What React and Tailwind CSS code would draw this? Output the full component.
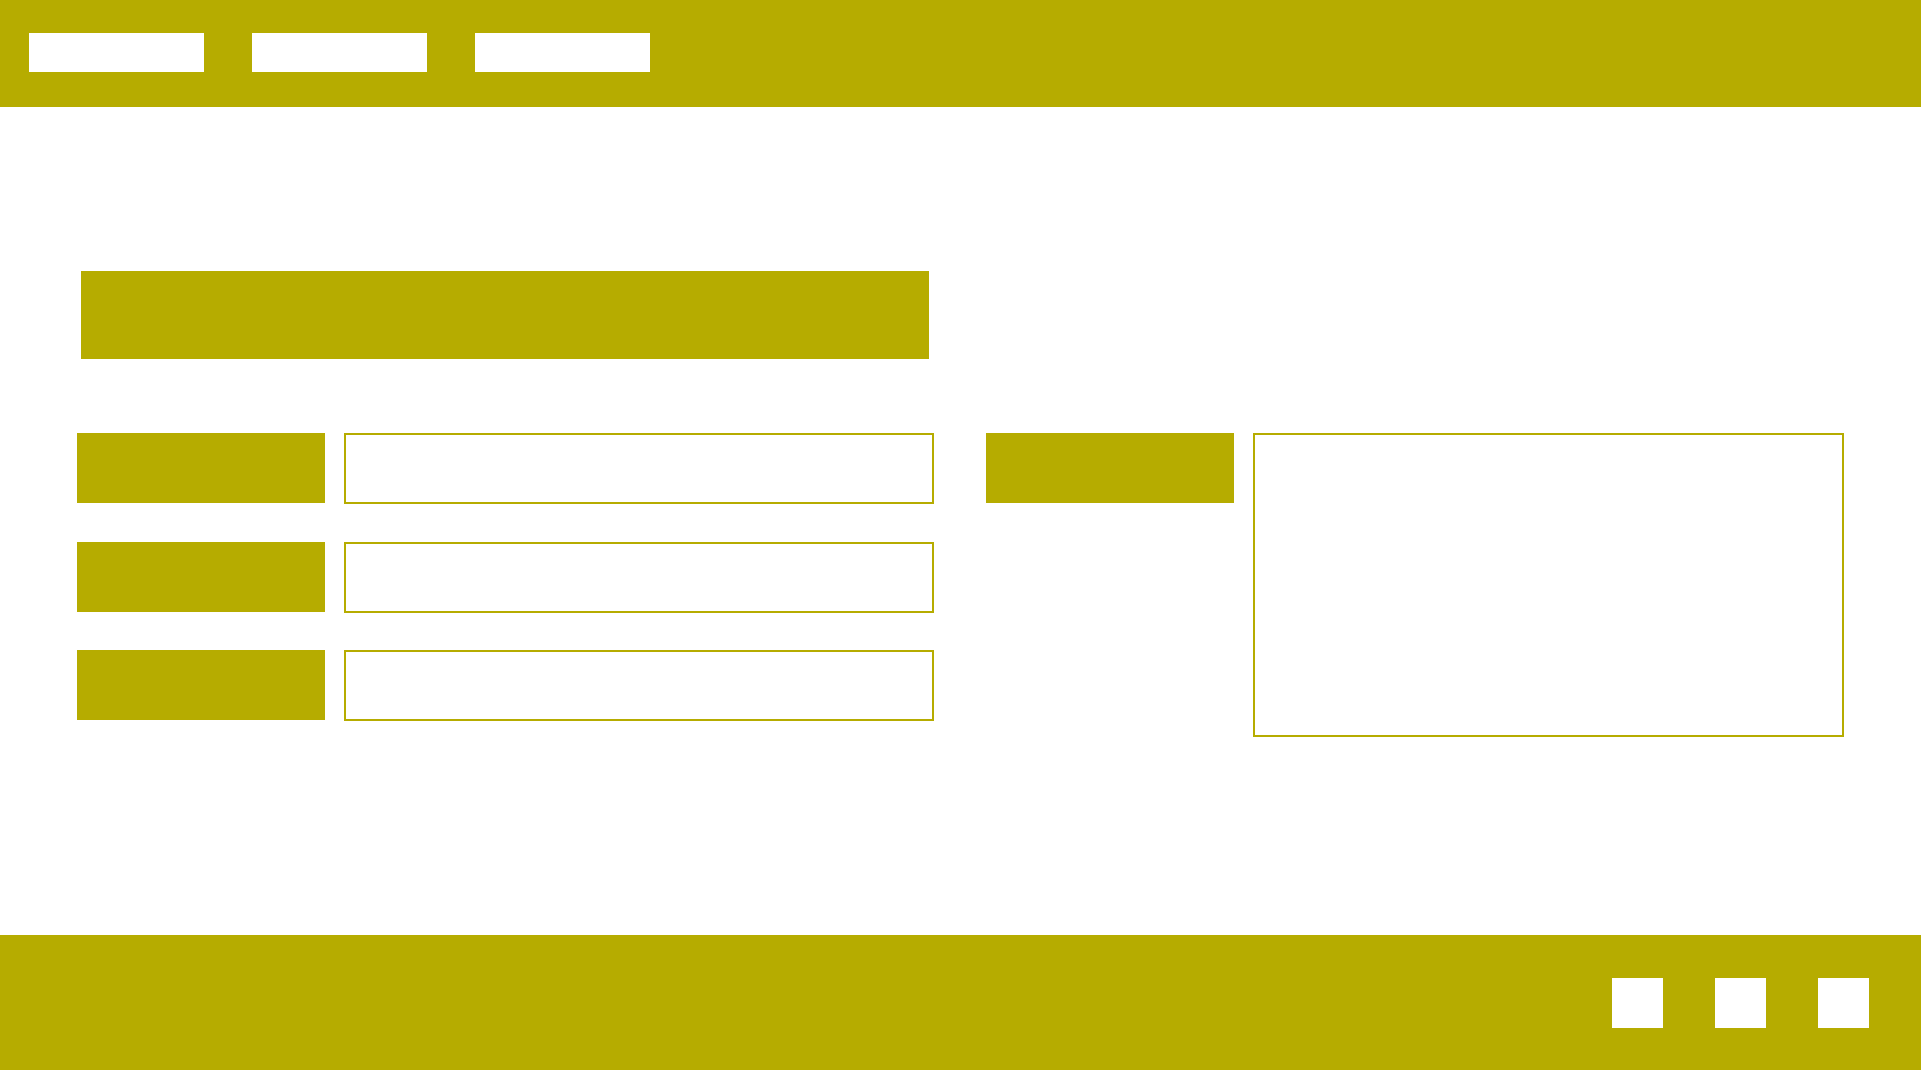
export default function App() {
  const rows = [0, 1, 2];
  return (
    <div className="h-screen flex flex-col bg-white">
      {/* Top bar */}
      <header className="h-[107px] shrink-0 bg-[#b6ac00] flex items-start gap-[48px] pl-[29px] pt-[33px]">
        <div className="w-[175px] h-[39px] bg-white" />
        <div className="w-[175px] h-[39px] bg-white" />
        <div className="w-[175px] h-[39px] bg-white" />
      </header>

      <main className="flex-1 pl-[77px] pt-[164px]">
        <div className="ml-[4px] w-[848px] h-[88px] bg-[#b6ac00]" />

        <div className="mt-[74px] flex items-start gap-[52px]">
          <div className="flex flex-col gap-[38.5px]">
            {rows.map(r => (
              <div key={r} className="flex items-start gap-[19px] h-[70px]">
                <div className="w-[248px] h-[70px] bg-[#b6ac00]" />
                <div className="w-[590px] h-[71px] border-2 border-[#b6ac00] bg-white" />
              </div>
            ))}
          </div>

          <div className="flex items-start gap-[19px]">
            <div className="w-[248px] h-[70px] bg-[#b6ac00]" />
            <div className="w-[591px] h-[304px] border-2 border-[#b6ac00] bg-white" />
          </div>
        </div>
      </main>

      {/* Bottom bar */}
      <footer className="h-[135px] shrink-0 bg-[#b6ac00] flex items-center justify-end gap-[52px] pr-[52px]">
        <div className="w-[51px] h-[50px] bg-white" />
        <div className="w-[51px] h-[50px] bg-white" />
        <div className="w-[51px] h-[50px] bg-white" />
      </footer>
    </div>
  );
}
